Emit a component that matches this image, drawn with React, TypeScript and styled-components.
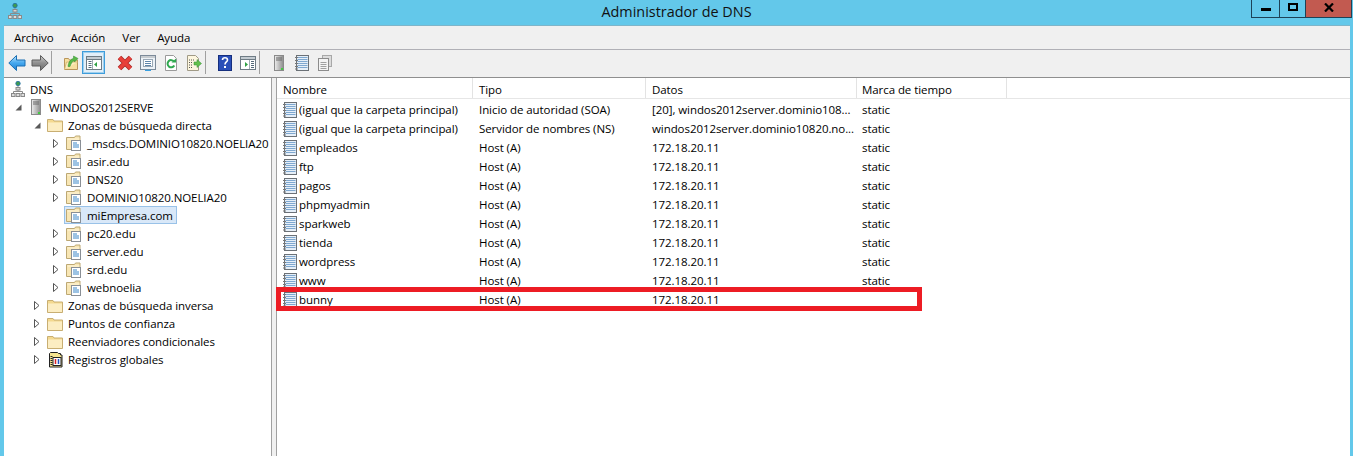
import { ReactNode } from 'react';
import styled, { createGlobalStyle } from 'styled-components';

const GlobalStyle = createGlobalStyle`
  html, body { margin: 0; padding: 0; height: 100%; overflow: hidden; }
  body { background: #63c8ea; font-family: "Open Sans", "Liberation Sans", sans-serif; font-size: 11.5px; letter-spacing: -0.07px; color: #000; }
  #root { height: 100%; }
`;

const Shell = styled.div`
  display: flex;
  flex-direction: column;
  width: 1353px;
  height: 456px;
  background: #63c8ea;
`;

const TitleBar = styled.header`
  position: relative;
  display: flex;
  justify-content: center;
  height: 26px;
  flex: none;
`;

const TitleIcon = styled.span`
  position: absolute;
  left: 7px;
  top: 3px;
  display: flex;
`;

const TitleText = styled.span`
  font-size: 14.4px;
  line-height: 24px;
  letter-spacing: 0;
  color: #111;
`;

const WindowButtons = styled.div`
  position: absolute;
  right: 1px;
  top: 0;
  display: flex;
  height: 18px;
`;

const WindowButton = styled.div<{ $w: number; $close?: boolean }>`
  display: flex;
  align-items: flex-start;
  justify-content: center;
  padding-top: 3px;
  box-sizing: border-box;
  width: ${(p) => p.$w}px;
  height: 18px;
  background: ${(p) => (p.$close ? '#c25a50' : 'transparent')};
  border: 1px solid #1d4257;
  border-top: none;
  border-right-width: ${(p) => (p.$close ? 1 : 0)}px;
`;

const Frame = styled.div`
  display: flex;
  flex-direction: column;
  flex: 1;
  min-height: 0;
  margin: 0 3px 0 4px;
  background: #f0f0f0;
  box-shadow: 0 -1px 0 #7fb5c9;
`;

const MenuBar = styled.nav`
  display: flex;
  align-items: center;
  gap: 17px;
  height: 23px;
  padding-left: 10px;
  border-bottom: 1px solid #b0b0b6;
  flex: none;
`;

const MenuItem = styled.span`
  line-height: 24px;
`;

const ToolBar = styled.div`
  display: flex;
  align-items: flex-start;
  height: 28px;
  padding: 1px 0 0 1px;
  box-sizing: border-box;
  border-bottom: 1px solid #8f8f8f;
  flex: none;
`;

const ToolButton = styled.div<{ $active?: boolean }>`
  display: flex;
  align-items: center;
  justify-content: center;
  box-sizing: border-box;
  width: 23px;
  height: 23px;
  background: ${(p) => (p.$active ? '#e2eff9' : 'transparent')};
  border: 1px solid ${(p) => (p.$active ? '#3f9ddb' : 'transparent')};
  box-shadow: ${(p) => (p.$active ? 'inset 0 0 0 1px #9fd0ee' : 'none')};
`;

const ToolSep = styled.div<{ $hidden?: boolean }>`
  width: 1px;
  height: 23px;
  margin: 0 7px 0 0;
  background: ${(p) => (p.$hidden ? 'transparent' : '#a0a0a0')};
`;

const Panes = styled.main`
  display: flex;
  flex: 1;
  min-height: 0;
`;

const TreePane = styled.aside`
  width: 267px;
  flex: none;
  background: #fff;
  border-right: 1px solid #a0a0a0;
  padding-top: 2px;
`;

const TreeRow = styled.div<{ $level: number }>`
  display: flex;
  align-items: center;
  height: 18.07px;
  padding-left: ${(p) => (p.$level === 0 ? 6 : p.$level * 19 - 13)}px;
  white-space: nowrap;
`;

const Expander = styled.span`
  display: flex;
  align-items: center;
  justify-content: center;
  width: 16px;
  height: 16px;
  margin-right: 2px;
  flex: none;
`;

const TreeItem = styled.span<{ $selected?: boolean; $root?: boolean }>`
  display: flex;
  align-items: center;
  gap: ${(p) => (p.$root ? 4 : 5)}px;
  height: 18px;
  box-sizing: border-box;
  margin-left: ${(p) => (p.$selected ? -2 : 0)}px;
  padding: 0 ${(p) => (p.$selected ? 3 : 0)}px 0 ${(p) => (p.$selected ? 1 : 0)}px;
  background: ${(p) => (p.$selected ? '#d9e8f8' : 'transparent')};
  border: ${(p) => (p.$selected ? '1px solid #99c2e8' : 'none')};
`;

const ListPane = styled.section`
  flex: 1;
  margin-left: 4px;
  background: #fff;
  border-left: 1px solid #a0a0a0;
  min-width: 0;
`;

const HeaderRow = styled.div`
  display: flex;
  height: 21px;
  border-bottom: 1px solid #e6e6e6;
  box-sizing: border-box;
`;

const HeaderCell = styled.div<{ $w: number; $pad: number }>`
  width: ${(p) => p.$w}px;
  box-sizing: border-box;
  padding-left: ${(p) => p.$pad}px;
  line-height: 23px;
  border-right: 1px solid #e3e3e3;
`;

const Rows = styled.div`
  display: flex;
  flex-direction: column;
  padding-top: 1px;
`;

const Row = styled.div`
  position: relative;
  display: flex;
  height: 19px;
  align-items: center;
`;

const Cell = styled.div<{ $w: number; $pad: number }>`
  display: flex;
  align-items: center;
  gap: 1px;
  width: ${(p) => p.$w}px;
  box-sizing: border-box;
  padding-left: ${(p) => p.$pad}px;
  white-space: nowrap;
`;

const Callout = styled.div`
  position: absolute;
  left: -1px;
  top: -3px;
  width: 646px;
  height: 24px;
  box-sizing: border-box;
  border: 5px solid #ed1c24;
  pointer-events: none;
`;

const Folder = () => (
  <svg width="16" height="16" viewBox="0 0 16 16">
    <path d="M.5 2.500h5.500l1 1.500h8.500v10.500h-15z" fill="#f4d98f" stroke="#c8ae72" />
    <path d="M1 5.500h14v8.500h-14z" fill="#fcedc2" />
  </svg>
);

const ZoneFolder = () => (
  <svg width="16" height="16" viewBox="0 0 16 16">
    <path d="M.5 2.500h8l1-1.500h4.500v13.500h-13.500z" fill="#f8e6b4" stroke="#bda873" />
    <path d="M1.500 4h12" stroke="#fff5d8" />
    <rect x="5.500" y="5.500" width="9" height="10" fill="#fff" stroke="#8a8f95" />
    <path d="M7 8h4M7 10h6M7 12h6" stroke="#3b87c8" />
  </svg>
);

const ServerIcon = () => (
  <svg width="16" height="16" viewBox="0 0 16 16">
    <defs>
      <linearGradient id="srv" x1="0" x2="1" y1="0" y2="0">
        <stop offset="0" stopColor="#eeeeee" />
        <stop offset="1" stopColor="#8c8c8c" />
      </linearGradient>
    </defs>
    <rect x="3.500" y="0.500" width="9" height="15" fill="url(#srv)" stroke="#8a8a8a" />
    <path d="M5 3h6M5 5h6" stroke="#6a6a6a" />
    <rect x="10" y="13" width="2" height="2" fill="#43c943" />
  </svg>
);

const DnsIcon = () => (
  <svg width="16" height="16" viewBox="0 0 16 16">
    <circle cx="8" cy="2.500" r="2.200" fill="#3f9a4f" stroke="#1f6ca8" strokeWidth="0.800" />
    <path d="M8 5v6M3.500 10.500h9M3.500 10.500v2M12.500 10.500v2" stroke="#8a8a8a" />
    <rect x="6" y="6.500" width="4" height="2.500" fill="#d5d5d5" stroke="#8a8a8a" />
    <rect x="1.500" y="12.500" width="3.500" height="3" fill="#dcdcdc" stroke="#8a8a8a" />
    <rect x="6.200" y="12.500" width="3.500" height="3" fill="#dcdcdc" stroke="#8a8a8a" />
    <rect x="11" y="12.500" width="3.500" height="3" fill="#dcdcdc" stroke="#8a8a8a" />
  </svg>
);

const RecordIcon = () => (
  <svg width="16" height="16" viewBox="0 0 16 16">
    <rect x="2.500" y="0.500" width="12" height="15" fill="#e6eff8" stroke="#6b7177" />
    <path d="M3.500 2.500h10M3.500 4.500h10M3.500 6.500h10M3.500 8.500h10M3.500 10.500h10M3.500 12.500h10" stroke="#7fa8d0" />
    <path d="M1 2.500h3M1 5.500h3M1 8.500h3M1 11.500h3M1 14h3" stroke="#777" />
  </svg>
);

const GlobalRecords = () => (
  <svg width="16" height="16" viewBox="0 0 16 16">
    <path d="M2.500 1.500l1-1h7l1 1h2v1.500h1.500v12h-12.500z" fill="#f7e58f" stroke="#222" />
    <rect x="6" y="5.500" width="8" height="8" fill="#fff" stroke="#222" />
    <path d="M8.500 7v5" stroke="#d22" strokeWidth="1.500" />
    <path d="M11.500 7v5" stroke="#1c4fc4" strokeWidth="1.500" />
    <path d="M4.500 4v10" stroke="#222" strokeWidth="2" strokeDasharray="1 1" />
  </svg>
);

const Caret = ({ open }: { open: boolean }) => (
  <svg width="9" height="9" viewBox="0 0 9 9" style={{ marginLeft: open ? 0 : -2 }}>
    {open ? <path d="M7.500 1.500v6h-6z" fill="#595959" /> : <path d="M2.500 0.500l4.500 4-4.500 4z" fill="#fff" stroke="#555" />}
  </svg>
);

const BackArrow = () => (
  <svg width="18" height="16" viewBox="0 0 18 16">
    <defs>
      <linearGradient id="back" x1="0" x2="0" y1="0" y2="1">
        <stop offset="0" stopColor="#bfe6fc" />
        <stop offset="0.5" stopColor="#45a8ef" />
        <stop offset="1" stopColor="#1f7fd0" />
      </linearGradient>
    </defs>
    <path d="M8.500 .5L.8 8l7.700 7.500v-4.500h8.500V5H8.500z" fill="url(#back)" stroke="#1b6eb3" />
  </svg>
);

const ForwardArrow = () => (
  <svg width="18" height="16" viewBox="0 0 18 16">
    <defs>
      <linearGradient id="forward" x1="0" x2="0" y1="0" y2="1">
        <stop offset="0" stopColor="#cfcfcf" />
        <stop offset="0.5" stopColor="#8f8f8f" />
        <stop offset="1" stopColor="#6e6e6e" />
      </linearGradient>
    </defs>
    <path d="M9.500 .5l7.700 7.500-7.700 7.500v-4.500H1V5h8.500z" fill="url(#forward)" stroke="#5c5c5c" />
  </svg>
);

const UpFolder = () => (
  <svg width="16" height="16" viewBox="0 0 16 16">
    <path d="M1.500 3.500h4l1 1.500h8v9.500h-13z" fill="#f7dfa0" stroke="#b9955a" />
    <path d="M1.500 14.500l2-7.500h11" fill="#fbeebf" stroke="#d8b878" />
    <path d="M5 11.500C5.500 7 7.500 4 10.500 3.500V1l4.500 2.500-3.500 3.500V5.500C9.500 6 8 8.500 7 11.500z" fill="#58b947" stroke="#2e8a2e" strokeWidth="0.500" />
  </svg>
);

const PaneIcon = ({ side }: { side: 'left' | 'right' }) => (
  <svg width="16" height="14" viewBox="0 0 16 14">
    <rect x="0.500" y="0.500" width="15" height="13" fill="#fff" stroke="#6e7b84" />
    <rect x="1" y="1" width="14" height="2" fill="#c3cbd1" />
    <path d="M1 3.500h14" stroke="#6e7b84" />
    {side === 'left' ? (
      <>
        <path d="M6.500 4v9" stroke="#9fabb3" />
        <path d="M2.500 5.500h3M2.500 7.500h3M2.500 9.500h3M2.500 11.500h3" stroke="#566b7a" />
        <path d="M11 6v5L8 8.500z" fill="#2ea043" />
      </>
    ) : (
      <>
        <path d="M9.500 4v9" stroke="#9fabb3" />
        <path d="M11 5.500h3M11 7.500h3M11 9.500h3M11 11.500h3" stroke="#566b7a" />
        <path d="M5 6v5L8 8.500z" fill="#2ea043" />
      </>
    )}
  </svg>
);

const DeleteIcon = () => (
  <svg width="16" height="16" viewBox="0 0 16 16">
    <path d="M2.500 2.500L13.500 13.500M13.500 2.500L2.500 13.500" stroke="#a82a28" strokeWidth="5" />
    <path d="M2.500 2.500L13.500 13.500M13.500 2.500L2.500 13.500" stroke="#e8403a" strokeWidth="3.400" />
  </svg>
);

const PropsIcon = () => (
  <svg width="16" height="16" viewBox="0 0 16 16">
    <rect x="0.500" y="0.500" width="15" height="14" fill="#edf2f7" stroke="#7c8a99" />
    <rect x="1" y="1" width="14" height="2" fill="#c7ccd0" />
    <rect x="3.500" y="4.500" width="9" height="7" fill="#fff" stroke="#9aa8b5" />
    <path d="M5 6.500h6M5 8.500h6M5 10.500h6" stroke="#5f86ab" />
    <path d="M5 15.500h6" stroke="#3aa0e0" strokeWidth="1.500" />
  </svg>
);

const RefreshIcon = () => (
  <svg width="16" height="16" viewBox="0 0 16 16">
    <path d="M2.500 .500h8l3 3v12h-11z" fill="#fff" stroke="#9a9a9a" />
    <path d="M11 6.500a3.600 3.600 0 1 0 .3 4" fill="none" stroke="#2fa84f" strokeWidth="2" />
    <path d="M8.500 7.500h4.500v-4z" fill="#2fa84f" />
  </svg>
);

const ExportIcon = () => (
  <svg width="16" height="16" viewBox="0 0 16 16">
    <path d="M1.500 .500h8l3 3v12h-11z" fill="#fdf6df" stroke="#a09a86" />
    <path d="M3 5h5M3 7.500h4M3 10h4M3 12.500h4" stroke="#555" strokeDasharray="1 1" />
    <path d="M8 7h3V4.500L15.500 8.500 11 12.500V10H8z" fill="#63c04c" stroke="#36903a" strokeWidth="0.500" />
  </svg>
);

const HelpIcon = () => (
  <svg width="16" height="16" viewBox="0 0 16 16">
    <rect x="1.500" y="0.500" width="13" height="15" fill="#2a4fb8" stroke="#162f7e" />
    <path d="M5.500 5c0-3 5-3 5 0 0 2-2.500 2-2.500 4.500" fill="none" stroke="#fff" strokeWidth="1.600" />
    <rect x="7" y="11" width="2" height="2" fill="#fff" />
  </svg>
);

const CopyIcon = () => (
  <svg width="16" height="16" viewBox="0 0 16 16">
    <rect x="5.500" y="0.500" width="9" height="11" fill="#dcdcdc" stroke="#a8a8a8" />
    <rect x="1.500" y="3.500" width="10" height="12" fill="#f4f4f4" stroke="#8c8c8c" />
    <path d="M3.500 7.500h6M3.500 9.500h6M3.500 11.500h6M3.500 13.500h6" stroke="#a0a0a0" />
  </svg>
);

type TreeEntry = { level: number; label: string; icon: ReactNode; caret?: 'open' | 'closed'; selected?: boolean };

const tree: TreeEntry[] = [
  { level: 0, label: 'DNS', icon: <DnsIcon /> },
  { level: 1, label: 'WINDOS2012SERVE', icon: <ServerIcon />, caret: 'open' },
  { level: 2, label: 'Zonas de búsqueda directa', icon: <Folder />, caret: 'open' },
  { level: 3, label: '_msdcs.DOMINIO10820.NOELIA20', icon: <ZoneFolder />, caret: 'closed' },
  { level: 3, label: 'asir.edu', icon: <ZoneFolder />, caret: 'closed' },
  { level: 3, label: 'DNS20', icon: <ZoneFolder />, caret: 'closed' },
  { level: 3, label: 'DOMINIO10820.NOELIA20', icon: <ZoneFolder />, caret: 'closed' },
  { level: 3, label: 'miEmpresa.com', icon: <ZoneFolder />, selected: true },
  { level: 3, label: 'pc20.edu', icon: <ZoneFolder />, caret: 'closed' },
  { level: 3, label: 'server.edu', icon: <ZoneFolder />, caret: 'closed' },
  { level: 3, label: 'srd.edu', icon: <ZoneFolder />, caret: 'closed' },
  { level: 3, label: 'webnoelia', icon: <ZoneFolder />, caret: 'closed' },
  { level: 2, label: 'Zonas de búsqueda inversa', icon: <Folder />, caret: 'closed' },
  { level: 2, label: 'Puntos de confianza', icon: <Folder />, caret: 'closed' },
  { level: 2, label: 'Reenviadores condicionales', icon: <Folder />, caret: 'closed' },
  { level: 2, label: 'Registros globales', icon: <GlobalRecords />, caret: 'closed' },
];

const records = [
  ['(igual que la carpeta principal)', 'Inicio de autoridad (SOA)', '[20], windos2012server.dominio108...', 'static'],
  ['(igual que la carpeta principal)', 'Servidor de nombres (NS)', 'windos2012server.dominio10820.no...', 'static'],
  ['empleados', 'Host (A)', '172.18.20.11', 'static'],
  ['ftp', 'Host (A)', '172.18.20.11', 'static'],
  ['pagos', 'Host (A)', '172.18.20.11', 'static'],
  ['phpmyadmin', 'Host (A)', '172.18.20.11', 'static'],
  ['sparkweb', 'Host (A)', '172.18.20.11', 'static'],
  ['tienda', 'Host (A)', '172.18.20.11', 'static'],
  ['wordpress', 'Host (A)', '172.18.20.11', 'static'],
  ['www', 'Host (A)', '172.18.20.11', 'static'],
  ['bunny', 'Host (A)', '172.18.20.11', ''],
];

const columns = [
  { title: 'Nombre', w: 196, pad: 6 },
  { title: 'Tipo', w: 173, pad: 6 },
  { title: 'Datos', w: 211, pad: 6 },
  { title: 'Marca de tiempo', w: 150, pad: 5 },
];

const App = () => (
  <Shell>
    <GlobalStyle />
    <TitleBar>
      <TitleIcon><DnsIcon /></TitleIcon>
      <TitleText>Administrador de DNS</TitleText>
      <WindowButtons>
        <WindowButton $w={28}>
          <svg width="10" height="10" viewBox="0 0 10 10"><rect y="5" width="10" height="3" fill="#000" /></svg>
        </WindowButton>
        <WindowButton $w={26}>
          <svg width="10" height="8" viewBox="0 0 10 8"><rect x="1" y="1" width="8" height="6" fill="none" stroke="#000" strokeWidth="2" /></svg>
        </WindowButton>
        <WindowButton $w={47} $close>
          <svg width="10" height="9" viewBox="0 0 10 9"><path d="M1 0.500l8 8M9 0.500l-8 8" stroke="#000" strokeWidth="2.200" /></svg>
        </WindowButton>
      </WindowButtons>
    </TitleBar>
    <Frame>
      <MenuBar>
        {['Archivo', 'Acción', 'Ver', 'Ayuda'].map((m) => <MenuItem key={m}>{m}</MenuItem>)}
      </MenuBar>
      <ToolBar>
        <ToolButton><BackArrow /></ToolButton>
        <ToolButton><ForwardArrow /></ToolButton>
        <ToolSep />
        <ToolButton><UpFolder /></ToolButton>
        <ToolButton $active><PaneIcon side="left" /></ToolButton>
        <ToolSep $hidden />
        <ToolButton><DeleteIcon /></ToolButton>
        <ToolButton><PropsIcon /></ToolButton>
        <ToolButton><RefreshIcon /></ToolButton>
        <ToolButton><ExportIcon /></ToolButton>
        <ToolSep />
        <ToolButton><HelpIcon /></ToolButton>
        <ToolButton><PaneIcon side="right" /></ToolButton>
        <ToolSep />
        <ToolButton><ServerIcon /></ToolButton>
        <ToolButton><RecordIcon /></ToolButton>
        <ToolButton><CopyIcon /></ToolButton>
      </ToolBar>
      <Panes>
        <TreePane>
          {tree.map((t) => (
            <TreeRow key={t.label} $level={t.level}>
              {t.level > 0 && <Expander>{t.caret && <Caret open={t.caret === 'open'} />}</Expander>}
              <TreeItem $selected={t.selected} $root={t.level === 0}>
                {t.icon}
                <span>{t.label}</span>
              </TreeItem>
            </TreeRow>
          ))}
        </TreePane>
        <ListPane>
          <HeaderRow>
            {columns.map((c) => <HeaderCell key={c.title} $w={c.w} $pad={c.pad}>{c.title}</HeaderCell>)}
          </HeaderRow>
          <Rows>
            {records.map((r) => (
              <Row key={r[0] + r[2]}>
                <Cell $w={columns[0].w} $pad={5}><RecordIcon />{r[0]}</Cell>
                <Cell $w={columns[1].w} $pad={columns[1].pad}>{r[1]}</Cell>
                <Cell $w={columns[2].w} $pad={columns[2].pad}>{r[2]}</Cell>
                <Cell $w={columns[3].w} $pad={columns[3].pad}>{r[3]}</Cell>
                {r[0] === 'bunny' && <Callout />}
              </Row>
            ))}
          </Rows>
        </ListPane>
      </Panes>
    </Frame>
  </Shell>
);

export default App;
